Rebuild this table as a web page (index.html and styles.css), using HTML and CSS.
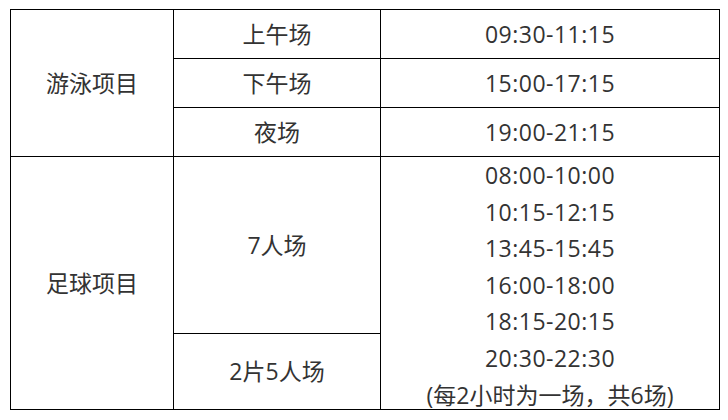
FILE: index.html
```html
<!DOCTYPE html>
<html lang="zh-CN">
<head>
<meta charset="utf-8">
<title>场次时间</title>
<link rel="stylesheet" href="styles.css">
</head>
<body>
<table class="schedule">
  <colgroup>
    <col class="c-sport">
    <col class="c-session">
    <col class="c-time">
  </colgroup>
  <tbody>
    <tr class="r-short">
      <td rowspan="3">游泳项目</td>
      <td>上午场</td>
      <td class="t">09:30-11:15</td>
    </tr>
    <tr class="r-short">
      <td>下午场</td>
      <td class="t">15:00-17:15</td>
    </tr>
    <tr class="r-short">
      <td>夜场</td>
      <td class="t">19:00-21:15</td>
    </tr>
    <tr class="r-tall">
      <td rowspan="2">足球项目</td>
      <td>7人场</td>
      <td rowspan="2" class="times">
        <div class="lines">
          <div class="t">08:00-10:00</div>
          <div class="t">10:15-12:15</div>
          <div class="t">13:45-15:45</div>
          <div class="t">16:00-18:00</div>
          <div class="t">18:15-20:15</div>
          <div class="t">20:30-22:30</div>
          <div>(每2小时为一场，共6场)</div>
        </div>
      </td>
    </tr>
    <tr class="r-low">
      <td>2片5人场</td>
    </tr>
  </tbody>
</table>
</body>
</html>
```

FILE: styles.css
```css
html, body {
  margin: 0;
  padding: 0;
  background: #ffffff;
}

body {
  padding: 9px 0 0 10px;
  font-family: "Open Sans", "Noto Sans CJK SC", sans-serif;
  font-size: 23px;
  color: #333333;
}

.schedule {
  border-collapse: collapse;
  table-layout: fixed;
  width: 709px;
  border: 1px solid #000;
}

.c-sport { width: 163px; }
.c-session { width: 207px; }
.c-time { width: 339px; }

.schedule td {
  border: 1px solid #000;
  padding: 0;
  text-align: center;
  vertical-align: middle;
  line-height: 30px;
  overflow: hidden;
}

.t {
  letter-spacing: 0.5px;
}

.r-short { height: 49px; }
.r-tall { height: 176px; }
.r-low { height: 76px; }

.times .lines {
  line-height: 36.6px;
  margin-bottom: -4px;
}
```
